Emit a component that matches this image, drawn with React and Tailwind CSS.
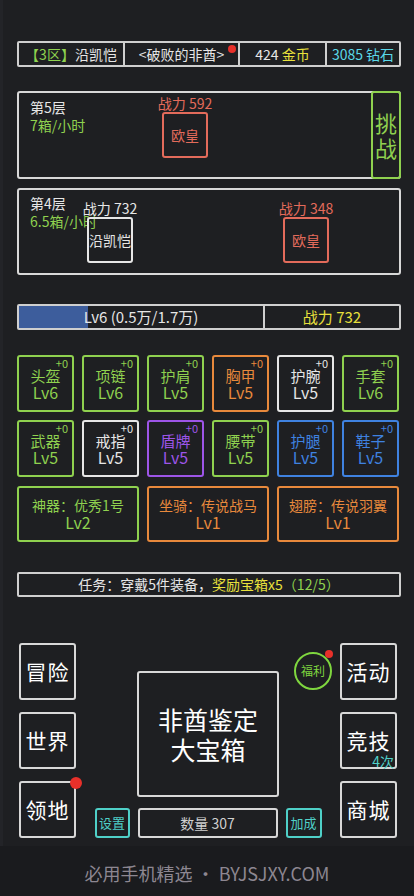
import React from "react";

const tones = {
  green: { text: "text-[#8fd14f]", border: "border-[#8fd14f]" },
  orange: { text: "text-[#e8893c]", border: "border-[#e8893c]" },
  white: { text: "text-[#e6e6e6]", border: "border-[#e6e6e6]" },
  purple: { text: "text-[#9d55e8]", border: "border-[#9d55e8]" },
  blue: { text: "text-[#3f82e0]", border: "border-[#3f82e0]" },
};

const gear = [
  { name: "头盔", lv: 6, tone: "green" },
  { name: "项链", lv: 6, tone: "green" },
  { name: "护肩", lv: 5, tone: "green" },
  { name: "胸甲", lv: 5, tone: "orange" },
  { name: "护腕", lv: 5, tone: "white" },
  { name: "手套", lv: 6, tone: "green" },
  { name: "武器", lv: 5, tone: "green" },
  { name: "戒指", lv: 5, tone: "white" },
  { name: "盾牌", lv: 5, tone: "purple" },
  { name: "腰带", lv: 5, tone: "green" },
  { name: "护腿", lv: 5, tone: "blue" },
  { name: "鞋子", lv: 5, tone: "blue" },
];

const extras = [
  { name: "神器：优秀1号", lv: 2, tone: "green" },
  { name: "坐骑：传说战马", lv: 1, tone: "orange" },
  { name: "翅膀：传说羽翼", lv: 1, tone: "orange" },
];

function Unit({ power, name, enemy, className }) {
  const color = enemy ? "text-[#e36b5b]" : "text-[#e6e6e6]";
  const border = enemy ? "border-[#e36b5b]" : "border-[#e6e6e6]";
  return (
    <div className={`absolute flex w-[52px] flex-col items-center ${className}`}>
      <p className={`whitespace-nowrap text-[14px] leading-[16px] ${color}`}>战力 {power}</p>
      <div className={`mt-[1px] flex h-[46px] w-[46px] items-center justify-center rounded-[3px] border-2 ${border}`}>
        <span className={`whitespace-nowrap text-[14px] ${color}`}>{name}</span>
      </div>
    </div>
  );
}

function GearCell({ item }) {
  const t = tones[item.tone];
  return (
    <div className={`relative flex h-[57px] flex-col items-center justify-center rounded-[3px] border-2 ${t.border}`}>
      <span className={`absolute right-[4px] top-0 text-[11px] leading-[12px] ${t.text}`}>+0</span>
      <span className={`block text-[15px] leading-[17px] ${t.text}`}>{item.name}</span>
      <span className={`block text-[16px] leading-[17px] ${t.text}`}>Lv{item.lv}</span>
    </div>
  );
}

function SideButton({ label, dot, sub }) {
  return (
    <div className="relative flex h-[57px] w-[57px] items-center justify-center rounded-[3px] border-2 border-[#d8d8d8]">
      <span className="text-[21px] tracking-[1px] text-white">{label}</span>
      {dot && <span className="absolute right-[-8px] top-[-6px] h-[12px] w-[12px] rounded-full bg-[#e8302a]" />}
      {sub && <span className="absolute bottom-[-2px] right-[1px] text-[14px] leading-[16px] text-[#4fd0c8]">{sub}</span>}
    </div>
  );
}

export default function App() {
  return (
    <div className="h-[896px] w-[414px] overflow-hidden bg-[#1e1f22] font-['Noto_Sans_CJK_SC','Noto_Sans',sans-serif]">
      <div className="flex h-[846px] flex-col border-l-[3px] border-[#232428]">
        <div className="ml-[14px] w-[384px]">
          {/* top bar */}
          <div className="mt-[41px] flex h-[26px] rounded-[2px] border-2 border-[#cfcfcf] text-[14px] leading-[22px]">
            <div className="flex w-[104px] items-center justify-center whitespace-nowrap">
              <span className="text-[#8fd14f]">【3区】</span>
              <span className="text-[#e6e6e6]">沿凯恺</span>
            </div>
            <div className="relative flex w-[115px] items-center justify-center whitespace-nowrap border-l-2 border-[#cfcfcf] text-[#e6e6e6]">
              &lt;破败的非酋&gt;
              <span className="absolute right-[2px] top-[2px] h-[8px] w-[8px] rounded-full bg-[#e8302a]" />
            </div>
            <div className="flex w-[87px] items-center justify-center whitespace-nowrap border-l-2 border-[#cfcfcf] text-[#e6e6e6]">
              424&nbsp;<span className="text-[#e8e03c]">金币</span>
            </div>
            <div className="flex flex-1 items-center justify-center whitespace-nowrap border-l-2 border-[#cfcfcf] text-[#5ad8e8]">
              3085 钻石
            </div>
          </div>

          {/* floor 5 */}
          <div className="relative mt-[24px] flex h-[88px] rounded-[3px] border-2 border-[#d8d8d8]">
            <div className="flex-1 pl-[11px] pt-[5px] text-[14px] leading-[18px]">
              <p className="text-[#e6e6e6]">第5层</p>
              <p className="text-[#8fd14f]">7箱/小时</p>
            </div>
            <Unit power={592} name="欧皇" enemy className="left-[140px] top-[2px]" />
            <div className="-my-[2px] -mr-[2px] flex w-[30px] flex-col items-center justify-center rounded-[3px] border-2 border-[#8fd14f] text-[22px] leading-[25px] text-[#8fd14f]">
              <span className="block">挑</span>
              <span className="block">战</span>
            </div>
          </div>

          {/* floor 4 */}
          <div className="relative mt-[9px] h-[87px] rounded-[3px] border-2 border-[#d8d8d8]">
            <div className="pl-[11px] pt-[4px] text-[14px] leading-[18px]">
              <p className="text-[#e6e6e6]">第4层</p>
              <p className="text-[#8fd14f]">6.5箱/小时</p>
            </div>
            <Unit power={732} name="沿凯恺" className="left-[65px] top-[10px]" />
            <Unit power={348} name="欧皇" enemy className="left-[261px] top-[10px]" />
          </div>

          {/* level bar */}
          <div className="mt-[29px] flex h-[26px] rounded-[2px] border-2 border-[#cfcfcf] text-[15px] leading-[22px]">
            <div className="relative w-[244px]">
              <div className="absolute inset-y-0 left-0 w-[69px] bg-[#3d5d9c]" />
              <p className="relative text-center text-[#e6e6e6]">Lv6 (0.5万/1.7万)</p>
            </div>
            <div className="flex-1 border-l-2 border-[#cfcfcf] text-center text-[#e8e03c]">战力 732</div>
          </div>

          {/* gear grid */}
          <div className="mt-[25px] w-[382px]">
            <div className="grid grid-cols-6 gap-2">
              {gear.map((g) => (
                <GearCell key={g.name} item={g} />
              ))}
            </div>
            <div className="mt-[9px] grid grid-cols-3 gap-2">
              {extras.map((e) => {
                const t = tones[e.tone];
                return (
                  <div key={e.name} className={`flex h-[56px] flex-col items-center justify-center rounded-[3px] border-2 ${t.border}`}>
                    <span className={`block text-[14px] leading-[17px] ${t.text}`}>{e.name}</span>
                    <span className={`block text-[16px] leading-[17px] ${t.text}`}>Lv{e.lv}</span>
                  </div>
                );
              })}
            </div>
          </div>

          {/* task */}
          <div className="mt-[30px] flex h-[25px] items-center justify-center rounded-[2px] border-2 border-[#cfcfcf] text-[14px]">
            <span className="text-[#e6e6e6]">任务：穿戴5件装备，</span>
            <span className="text-[#e8e03c]">奖励宝箱x5</span>
            <span className="text-[#8fd14f]">（12/5）</span>
          </div>
        </div>

        {/* bottom controls */}
        <div className="ml-[16px] mt-[46px] flex h-[195px] w-[378px]">
          <div className="flex flex-col gap-[12px]">
            <SideButton label="冒险" />
            <SideButton label="世界" />
            <SideButton label="领地" dot />
          </div>
          <div className="relative flex flex-1 flex-col items-center justify-end">
            <div className="absolute left-[218px] top-[9px] flex h-[38px] w-[38px] items-center justify-center rounded-full border-2 border-[#7fd63f]">
              <span className="text-[12px] text-[#7fd63f]">福利</span>
              <span className="absolute right-[-3px] top-[-4px] h-[8px] w-[8px] rounded-full bg-[#e8302a]" />
            </div>
            <div className="flex h-[126px] w-[142px] flex-col items-center justify-center rounded-[3px] border-2 border-[#d8d8d8] text-[25px] leading-[30px] text-white">
              <span className="block">非酋鉴定</span>
              <span className="block">大宝箱</span>
            </div>
            <div className="mt-[11px] flex h-[30px] gap-2">
              <div className="flex w-[35px] items-center justify-center rounded-[3px] border-2 border-[#4fd0c8] text-[13px] text-[#4fd0c8]">设置</div>
              <div className="flex w-[140px] items-center justify-center rounded-[3px] border-2 border-[#d8d8d8] text-[14px] text-[#d0d0d0]">数量 307</div>
              <div className="flex w-[36px] items-center justify-center rounded-[3px] border-2 border-[#4fd0c8] text-[13px] text-[#4fd0c8]">加成</div>
            </div>
          </div>
          <div className="flex flex-col gap-[12px]">
            <SideButton label="活动" />
            <SideButton label="竞技" sub="4次" />
            <SideButton label="商城" />
          </div>
        </div>
      </div>

      {/* footer */}
      <div className="flex h-[50px] items-center justify-center bg-[#1a1b1e] pt-[4px] text-[18px] text-[#8d8791]">
        必用手机精选 • BYJSJXY.COM
      </div>
    </div>
  );
}
